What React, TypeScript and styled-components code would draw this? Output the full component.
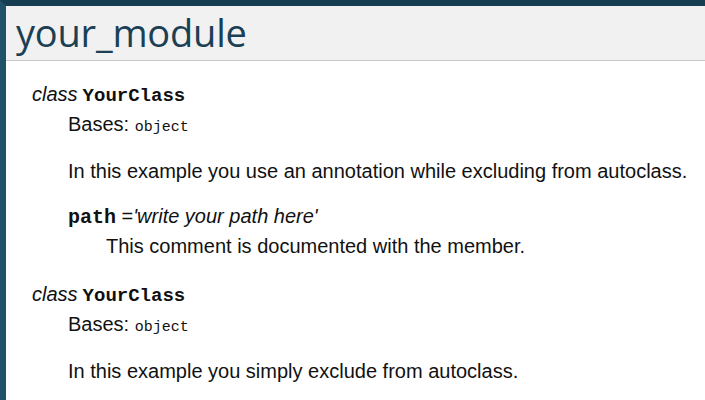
import styled, { createGlobalStyle } from "styled-components";

const GlobalStyle = createGlobalStyle`
  html, body {
    margin: 0;
    padding: 0;
    background: #ffffff;
  }
`;

const Page = styled.div`
  width: 705px;
  height: 400px;
  overflow: hidden;
  box-sizing: border-box;
  border-left: 6px solid #1f5169;
  border-top: 6px solid #163d50;
  font-family: "Liberation Sans", Arial, sans-serif;
  color: #111;
`;

const Header = styled.div`
  height: 55px;
  box-sizing: border-box;
  background: #f1f1f1;
  border-bottom: 1px solid #c8c8c8;
  display: flex;
  align-items: center;
  padding: 0 0 3px 10px;
`;

const Title = styled.h1`
  margin: 0;
  font-family: "Open Sans", "DejaVu Sans", sans-serif;
  font-weight: 400;
  font-size: 38px;
  line-height: 50px;
  color: #1b3f54;
  letter-spacing: -0.2px;
`;

const Content = styled.div`
  padding: 18px 0 0 26px;
`;

const ClassBlock = styled.dl<{ $gap?: number }>`
  margin: 0 0 ${({ $gap }) => $gap ?? 0}px;
`;

const Signature = styled.dt`
  font-size: 20px;
  line-height: 30px;
  height: 30px;
  display: flex;
  align-items: baseline;
`;

const Keyword = styled.em`
  font-style: italic;
  margin-right: 5px;
`;

const Name = styled.code<{ $size?: number }>`
  font-family: "Liberation Mono", "Courier New", monospace;
  font-weight: bold;
  font-size: ${({ $size }) => $size ?? 19}px;
  line-height: 1;
`;

const Body = styled.dd`
  margin: 0 0 0 36px;
`;

const Line = styled.p<{ $top?: number }>`
  margin: ${({ $top }) => $top ?? 0}px 0 0;
  font-size: 20px;
  line-height: 30px;
  height: 30px;
`;

const Small = styled.code`
  font-family: "Liberation Mono", "Courier New", monospace;
  font-size: 15px;
  line-height: 1;
`;

const Member = styled.dl`
  margin: 15px 0 0;
`;

const Value = styled.em`
  font-style: italic;
`;

const MemberDoc = styled.dd`
  margin: 0 0 0 38px;
  font-size: 20px;
  line-height: 30px;
  height: 30px;
`;

export default function App() {
  return (
    <>
      <GlobalStyle />
      <Page>
        <Header>
          <Title>your_module</Title>
        </Header>
        <Content>
          <ClassBlock $gap={18}>
            <Signature>
              <Keyword>class</Keyword>
              <Name>YourClass</Name>
            </Signature>
            <Body>
              <Line>
                Bases: <Small>object</Small>
              </Line>
              <Line $top={17}>
                In this example you use an annotation while excluding from
                autoclass.
              </Line>
              <Member>
                <Signature>
                  <Name $size={20}>path</Name>
                  &nbsp;=<Value>'write your path here'</Value>
                </Signature>
                <MemberDoc>This comment is documented with the member.</MemberDoc>
              </Member>
            </Body>
          </ClassBlock>
          <ClassBlock>
            <Signature>
              <Keyword>class</Keyword>
              <Name>YourClass</Name>
            </Signature>
            <Body>
              <Line>
                Bases: <Small>object</Small>
              </Line>
              <Line $top={17}>
                In this example you simply exclude from autoclass.
              </Line>
            </Body>
          </ClassBlock>
        </Content>
      </Page>
    </>
  );
}
